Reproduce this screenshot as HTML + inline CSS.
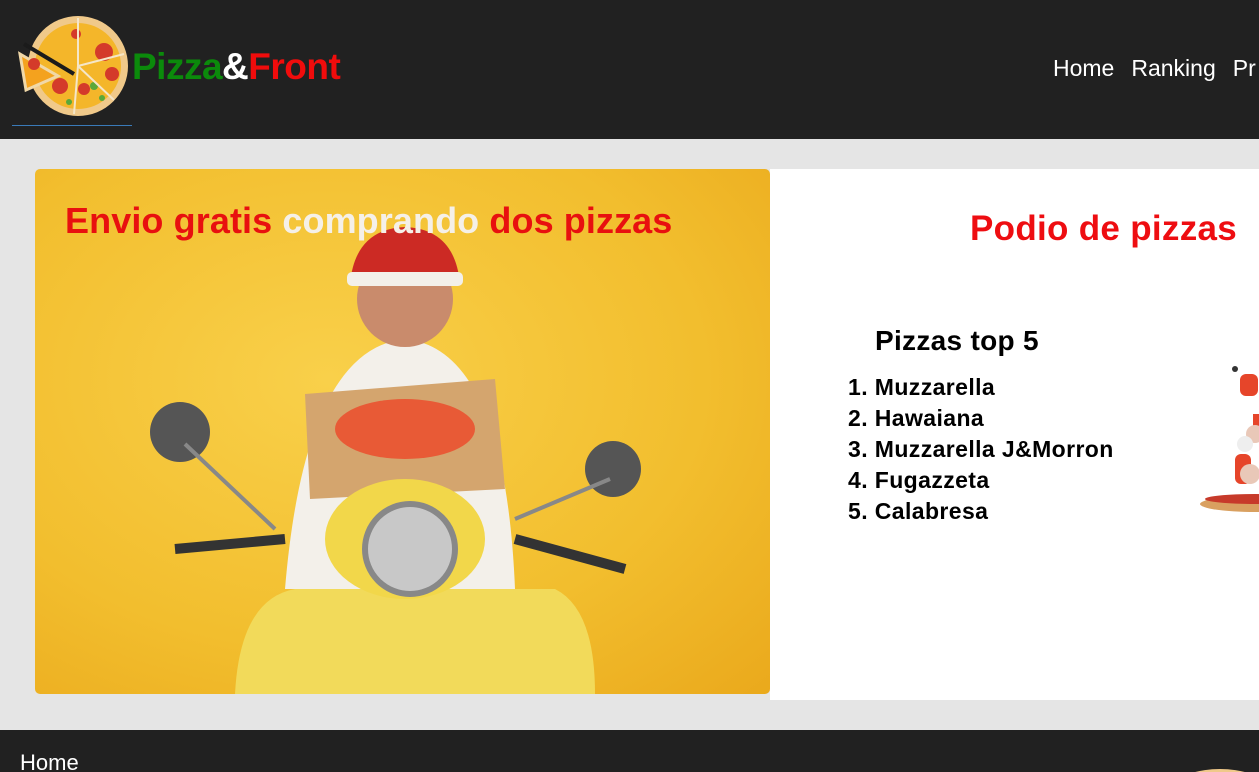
<!DOCTYPE html>
<html><head><meta charset="utf-8"><style>
*{margin:0;padding:0;box-sizing:border-box}
html,body{width:1259px;height:772px;overflow:hidden}
body{background:#e5e5e5;font-family:"Liberation Sans",Arial,sans-serif;position:relative}
header{position:absolute;left:0;top:0;width:1259px;height:139px;background:#212121}
.logo{position:absolute;left:14px;top:14px}
.uline{position:absolute;left:12px;top:125px;width:120px;height:1px;background:#3a7ab8}
.brand{position:absolute;left:132px;top:46px;font-size:37px;font-weight:bold;letter-spacing:-0.5px}
nav{position:absolute;left:1053px;top:55px;color:#fff;font-size:23px;white-space:nowrap}
nav span{margin-right:17px}
.card{position:absolute;left:35px;top:169px;width:735px;height:525px;border-radius:5px;overflow:hidden;background:radial-gradient(ellipse at 40% 40%,#f9d04a,#f2be2e 60%,#eaa91c)}
.card h2{position:absolute;left:30px;top:31px;font-size:36px;letter-spacing:0.1px;color:#e8100f;white-space:nowrap}
.right{position:absolute;left:770px;top:169px;width:489px;height:531px;background:#fff}
.right h2{position:absolute;left:200px;top:40px;color:#ee0d11;font-size:35px;letter-spacing:0.3px;white-space:nowrap}
.right h3{position:absolute;left:105px;top:156px;font-size:28px;letter-spacing:0.3px}
.right ol{position:absolute;left:78px;top:203px;font-size:23px;font-weight:bold;line-height:31px;list-style-position:inside;letter-spacing:0.4px}
footer{position:absolute;left:0;top:730px;width:1259px;height:42px;background:#212121;color:#fff;font-size:22px;overflow:hidden}
footer span{position:absolute;left:20px;top:20px}
</style></head><body>
<header>
<svg class="logo" width="116" height="102" viewBox="0 0 116 102">
<circle cx="64" cy="52" r="50" fill="#f0c98a"/>
<circle cx="64" cy="52" r="43" fill="#f4b62a"/>
<g fill="#d43a2a"><circle cx="90" cy="38" r="9"/><circle cx="98" cy="60" r="7"/><circle cx="46" cy="72" r="8"/><circle cx="62" cy="20" r="5"/><circle cx="70" cy="75" r="6"/></g>
<g fill="#5aa83a"><circle cx="80" cy="72" r="4"/><circle cx="88" cy="84" r="3"/><circle cx="55" cy="88" r="3"/></g>
<path d="M6 40 L44 62 L12 76 Z" fill="#f4a21e" stroke="#f0d8a8" stroke-width="3"/>
<circle cx="20" cy="50" r="6" fill="#d43a2a"/>
<path d="M10 30 L60 60" stroke="#1b1b1b" stroke-width="4"/>
<path d="M64 52 L64 4 M64 52 L110 40 M64 52 L100 86 M64 52 L60 100" stroke="#f5e6c8" stroke-width="2"/>
</svg>
<div class="uline"></div>
<div class="brand"><span style="color:#0b8a0b">Pizza</span><span style="color:#fff">&amp;</span><span style="color:#f10c0c">Front</span></div>
<nav><span>Home</span><span>Ranking</span><span>Pr</span></nav>
</header>
<div class="card">
<svg width="735" height="525" style="position:absolute;left:0;top:0">
<path d="M200 525 Q205 430 260 420 L520 420 Q560 440 560 525Z" fill="#f2da5a"/>
<path d="M250 420 Q270 180 370 170 Q470 180 480 420Z" fill="#f3f0ea"/>
<circle cx="370" cy="130" r="48" fill="#c98b6c"/>
<path d="M315 115 Q320 60 370 58 Q420 60 425 115 Z" fill="#cc2a24"/>
<rect x="312" y="103" width="116" height="14" rx="5" fill="#f3f0ea"/>
<path d="M270 225 L460 210 L470 320 L275 330Z" fill="#d4a56e"/>
<ellipse cx="370" cy="260" rx="70" ry="30" fill="#e85a36"/>
<ellipse cx="370" cy="370" rx="80" ry="60" fill="#f2d74a"/>
<circle cx="375" cy="380" r="45" fill="#c8c8c8" stroke="#888" stroke-width="6"/>
<path d="M140 380 L250 370 M480 370 L590 400" stroke="#333" stroke-width="10"/>
<circle cx="145" cy="263" r="30" fill="#555"/><circle cx="578" cy="300" r="28" fill="#555"/>
<path d="M150 275 L240 360 M575 310 L480 350" stroke="#888" stroke-width="4"/>
</svg>
<h2>Envio gratis <span style="color:#f5f0e8">comprando</span> dos pizzas</h2>
</div>
<div class="right">
<h2>Podio de pizzas</h2>
<h3>Pizzas top 5</h3>
<ol><li>Muzzarella</li><li>Hawaiana</li><li>Muzzarella J&amp;Morron</li><li>Fugazzeta</li><li>Calabresa</li></ol>
<svg width="70" height="180" style="position:absolute;left:425px;top:165px">
<ellipse cx="60" cy="170" rx="55" ry="8" fill="#d9a060"/>
<ellipse cx="60" cy="165" rx="50" ry="5" fill="#c73a2a"/>
<g fill="#e6452a"><rect x="45" y="40" width="18" height="22" rx="6"/><rect x="40" y="120" width="16" height="30" rx="6"/><rect x="58" y="80" width="12" height="20"/></g>
<g fill="#e9c8b8"><circle cx="55" cy="140" r="10"/><circle cx="60" cy="100" r="9"/></g>
<circle cx="50" cy="110" r="8" fill="#eee"/>
<circle cx="40" cy="35" r="3" fill="#333"/>
</svg>
</div>
<footer><span>Home</span>
<svg width="80" height="20" style="position:absolute;left:1175px;top:33px"><ellipse cx="45" cy="20" rx="40" ry="14" fill="#f0c98a"/></svg>
</footer>
</body></html>
